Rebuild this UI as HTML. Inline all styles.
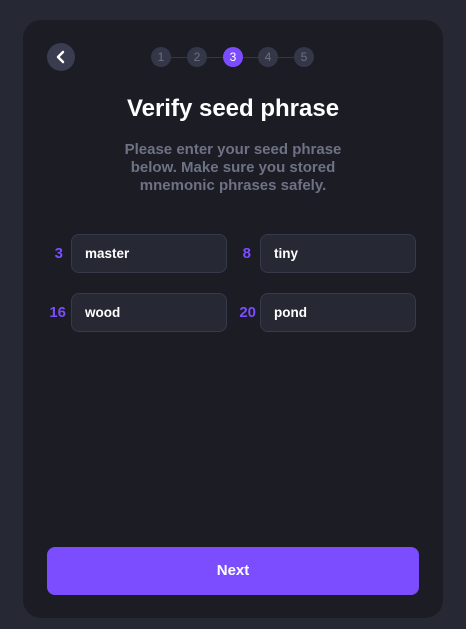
<!DOCTYPE html><html><head><style>
body{margin:0;width:466px;height:629px;background:#262834;font-family:"Liberation Sans",sans-serif;position:relative;overflow:hidden}
.card{position:absolute;left:23px;top:20px;width:420px;height:598px;background:#1b1c24;border-radius:18px}
.back{position:absolute;left:47px;top:43px;width:28px;height:28px;border-radius:50%;background:#3a3d4f}
.st{position:absolute;top:47px;width:20px;height:20px;border-radius:50%;background:#343747;color:#6b7080;font-size:12px;line-height:20px;text-align:center}
.line{position:absolute;top:57px;height:1px;background:#343747;left:161px;width:143px}
h1{position:absolute;top:95px;left:0;width:466px;text-align:center;margin:0;color:#fff;font-size:24px;font-weight:bold}
.p{position:absolute;top:141px;left:110px;width:246px;text-align:center;color:#6d7285;font-size:15px;font-weight:bold;line-height:18px}
.n{position:absolute;color:#7b4dff;font-weight:bold;font-size:15px;width:30px;text-align:right}
.in{position:absolute;height:37px;background:#262834;border:1px solid #373a4a;border-radius:8px;color:#fff;font-size:13.5px;font-weight:bold;line-height:37px;box-sizing:content-box;padding-left:13px;width:141px}
.btn{position:absolute;left:47px;top:547px;width:372px;height:48px;background:#7b4dff;border-radius:8px;color:#fff;font-weight:bold;font-size:15px;text-align:center;line-height:48px}
</style></head><body>
<div class="card"></div>
<div class="back"><svg width="28" height="28"><path d="M16 9 L11 14 L16 19" stroke="#fff" stroke-width="2.5" fill="none" stroke-linecap="round" stroke-linejoin="round"/></svg></div>
<div class="line"></div>
<div class="st" style="left:151px">1</div>
<div class="st" style="left:187px">2</div>
<div class="st" style="left:223px;background:#7b4dff;color:#fff">3</div>
<div class="st" style="left:258px">4</div>
<div class="st" style="left:294px">5</div>
<h1>Verify seed phrase</h1>
<div class="p">Please enter your seed phrase below. Make sure you stored mnemonic phrases safely.</div>
<div class="n" style="left:33px;top:245px">3</div>
<div class="in" style="left:71px;top:234px">master</div>
<div class="n" style="left:221px;top:245px">8</div>
<div class="in" style="left:260px;top:234px">tiny</div>
<div class="n" style="left:36px;top:304px">16</div>
<div class="in" style="left:71px;top:293px">wood</div>
<div class="n" style="left:226px;top:304px">20</div>
<div class="in" style="left:260px;top:293px">pond</div>
<div class="btn">Next</div>
</body></html>
